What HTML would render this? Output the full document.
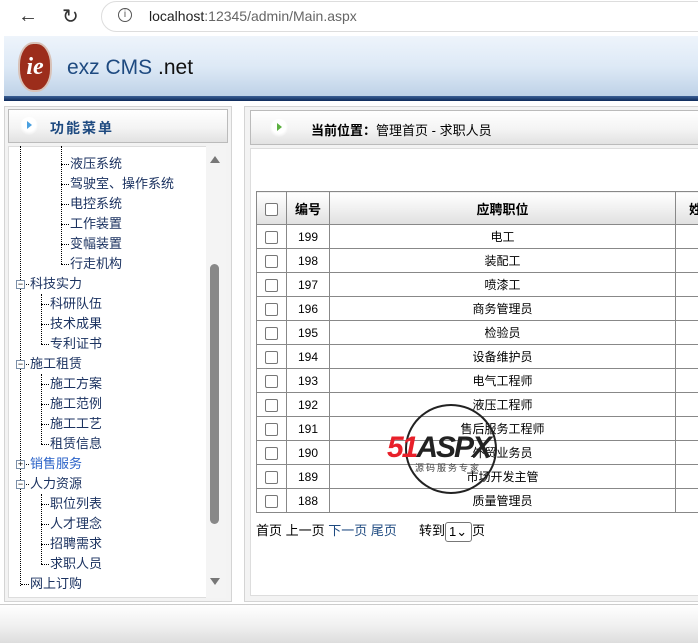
<!DOCTYPE html>
<html><head><meta charset="utf-8"><style>
*{margin:0;padding:0;box-sizing:border-box}
body{width:698px;height:643px;overflow:hidden;background:#fff;font-family:"Liberation Sans","Noto Sans CJK SC",sans-serif;font-size:12px;position:relative}
.abs{position:absolute}
.chrome{left:0;top:0;width:698px;height:34px;background:#fff}
.addr{left:101px;top:1px;width:620px;height:31px;border:1px solid #ddd;border-radius:16px;background:#fff}
.hdr{left:4px;top:36px;width:694px;height:62px;background:linear-gradient(#eef4fb,#dde9f6 50%,#bcd0e6)}
.line{left:4px;top:96px;width:694px;height:5px;background:linear-gradient(#3b5f95,#0e2a5a)}
.panel{border:1px solid #d4d4d4;background:#f3f3f3}
.bar{border:1px solid #bbb;background:linear-gradient(#fff,#f4f4f4 55%,#e2e2e2)}
.ball{width:18px;height:18px;border-radius:50%;background:radial-gradient(circle at 50% 40%,#fff 50%,#ddd)}
.tree div{position:absolute;height:20px;line-height:20px;font-size:13px;color:#1b3260;white-space:nowrap}
.tree div::before{content:"";position:absolute;left:-9px;top:10px;width:8px;border-top:1px dotted #000}
.tree div.nb::before{display:none}
.box{position:absolute;width:9px;height:9px;border:1px solid #7a8ea8;background:#fff;font-size:9px;line-height:7px;text-align:center;color:#000}
table{border-collapse:collapse;position:absolute;left:256px;top:191px;width:460px}
td,th{border:1px solid #888;height:24px;text-align:center;font-size:12px;color:#000}
th{height:33px;background:linear-gradient(#fff,#f2f2f2 45%,#e0e0e0);font-size:13px}
.cb{display:inline-block;width:13px;height:13px;border:1px solid #777;border-radius:2px;vertical-align:middle;background:#fff}
</style></head><body>
<div class="abs chrome"></div>
<div class="abs" style="left:18px;top:5px;font-size:20px;color:#333">←</div>
<div class="abs" style="left:62px;top:4px;font-size:20px;color:#333">↻</div>
<div class="abs addr"></div>
<div class="abs" style="left:118px;top:8px;width:14px;height:14px;border:1.5px solid #555;border-radius:50%;font-size:10px;text-align:center;line-height:12px;color:#555">i</div>
<div class="abs" style="left:149px;top:8px;font-size:14px;color:#222">localhost<span style="color:#666">:12345/admin/Main.aspx</span></div>
<div class="abs hdr"></div>
<div class="abs" style="left:18px;top:42px;width:34px;height:50px;border-radius:45%;background:#9c2d1b;border:2px solid #d8c2b8;color:#fff;font:italic bold 24px 'Liberation Serif',serif;text-align:center;line-height:46px">ie</div>
<div class="abs" style="left:67px;top:56px;font-size:21px;color:#1e4a80">exz CMS <span style="color:#111">.net</span></div>
<div class="abs line"></div>
<div class="abs panel" style="left:4px;top:106px;width:228px;height:496px"></div>
<div class="abs bar" style="left:8px;top:109px;width:220px;height:34px"></div>
<div class="abs ball" style="left:20px;top:117px"></div>
<div class="abs" style="left:27px;top:121px;border-left:5px solid #4aa0e0;border-top:4px solid transparent;border-bottom:4px solid transparent"></div>
<div class="abs" style="left:50px;top:118px;font-size:14px;font-weight:bold;color:#1e4a80;letter-spacing:2px">功能菜单</div>
<div class="abs" style="left:8px;top:146px;width:218px;height:452px;background:#fff;border:1px solid #ddd"></div>
<div class="abs" style="left:206px;top:146px;width:20px;height:452px;background:#f4f4f4"></div>
<div class="abs" style="left:210px;top:264px;width:9px;height:260px;background:#888;border-radius:5px"></div>
<div class="abs" style="left:210px;top:156px;border-bottom:7px solid #777;border-left:5px solid transparent;border-right:5px solid transparent"></div>
<div class="abs" style="left:210px;top:578px;border-top:7px solid #777;border-left:5px solid transparent;border-right:5px solid transparent"></div>
<div class="abs" style="left:20px;top:146px;height:440px;border-left:1px dotted #000"></div>
<div class="abs" style="left:61px;top:146px;height:118px;border-left:1px dotted #000"></div>
<div class="abs" style="left:41px;top:294px;height:50px;border-left:1px dotted #000"></div>
<div class="abs" style="left:41px;top:374px;height:70px;border-left:1px dotted #000"></div>
<div class="abs" style="left:41px;top:494px;height:70px;border-left:1px dotted #000"></div>
<div class="tree">
<div style="left:70px;top:154px">液压系统</div>
<div style="left:70px;top:174px">驾驶室、操作系统</div>
<div style="left:70px;top:194px">电控系统</div>
<div style="left:70px;top:214px">工作装置</div>
<div style="left:70px;top:234px">变幅装置</div>
<div style="left:70px;top:254px">行走机构</div>
<div style="left:30px;top:274px">科技实力</div>
<div style="left:50px;top:294px">科研队伍</div>
<div style="left:50px;top:314px">技术成果</div>
<div style="left:50px;top:334px">专利证书</div>
<div style="left:30px;top:354px">施工租赁</div>
<div style="left:50px;top:374px">施工方案</div>
<div style="left:50px;top:394px">施工范例</div>
<div style="left:50px;top:414px">施工工艺</div>
<div style="left:50px;top:434px">租赁信息</div>
<div style="left:30px;top:454px;color:#2a62c8">销售服务</div>
<div style="left:30px;top:474px">人力资源</div>
<div style="left:50px;top:494px">职位列表</div>
<div style="left:50px;top:514px">人才理念</div>
<div style="left:50px;top:534px">招聘需求</div>
<div style="left:50px;top:554px">求职人员</div>
<div style="left:30px;top:574px">网上订购</div>
</div>
<div class="box" style="left:16px;top:280px">−</div>
<div class="box" style="left:16px;top:360px">−</div>
<div class="box" style="left:16px;top:460px">+</div>
<div class="box" style="left:16px;top:480px">−</div>
<div class="abs panel" style="left:244px;top:106px;width:460px;height:496px"></div>
<div class="abs bar" style="left:250px;top:110px;width:460px;height:35px"></div>
<div class="abs ball" style="left:270px;top:119px"></div>
<div class="abs" style="left:277px;top:123px;border-left:5px solid #5cb040;border-top:4px solid transparent;border-bottom:4px solid transparent"></div>
<div class="abs" style="left:311px;top:120px;font-size:13px"><b>当前位置：</b>管理首页 - 求职人员</div>
<div class="abs" style="left:250px;top:148px;width:460px;height:448px;background:#fff;border:1px solid #ddd"></div>
<table>
<tr><th style="width:30px"><span class="cb"></span></th><th style="width:43px">编号</th><th style="width:346px">应聘职位</th><th>姓</th></tr>
<tr><td><span class="cb"></span></td><td>199</td><td>电工</td><td></td></tr>
<tr><td><span class="cb"></span></td><td>198</td><td>装配工</td><td></td></tr>
<tr><td><span class="cb"></span></td><td>197</td><td>喷漆工</td><td></td></tr>
<tr><td><span class="cb"></span></td><td>196</td><td>商务管理员</td><td></td></tr>
<tr><td><span class="cb"></span></td><td>195</td><td>检验员</td><td></td></tr>
<tr><td><span class="cb"></span></td><td>194</td><td>设备维护员</td><td></td></tr>
<tr><td><span class="cb"></span></td><td>193</td><td>电气工程师</td><td></td></tr>
<tr><td><span class="cb"></span></td><td>192</td><td>液压工程师</td><td></td></tr>
<tr><td><span class="cb"></span></td><td>191</td><td>售后服务工程师</td><td></td></tr>
<tr><td><span class="cb"></span></td><td>190</td><td>外贸业务员</td><td></td></tr>
<tr><td><span class="cb"></span></td><td>189</td><td>市场开发主管</td><td></td></tr>
<tr><td><span class="cb"></span></td><td>188</td><td>质量管理员</td><td></td></tr>
</table>
<div class="abs" style="left:256px;top:520px;font-size:13px">首页 上一页 <span style="color:#1e4a80">下一页 尾页</span></div>
<div class="abs" style="left:419px;top:520px;font-size:13px">转到<span style="display:inline-block;border:1px solid #777;border-radius:3px;width:27px;height:20px;vertical-align:middle;line-height:18px;padding-left:3px">1⌄</span>页</div>
<div class="abs" style="left:405px;top:404px;width:92px;height:90px;border:2.5px solid #222;border-radius:50%"></div>
<div class="abs" style="left:387px;top:431px;font:italic bold 30px 'Liberation Sans',sans-serif;color:#e8202a;letter-spacing:-2px">51<span style="color:#222">ASPX</span></div>
<div class="abs" style="left:415px;top:461px;font-size:9px;color:#444;letter-spacing:2px">源码服务专家</div>
<div class="abs" style="left:0;top:604px;width:698px;height:39px;border-top:1px solid #ccc;background:linear-gradient(#fff,#f0f0f0 55%,#ddd)"></div>
</body></html>
